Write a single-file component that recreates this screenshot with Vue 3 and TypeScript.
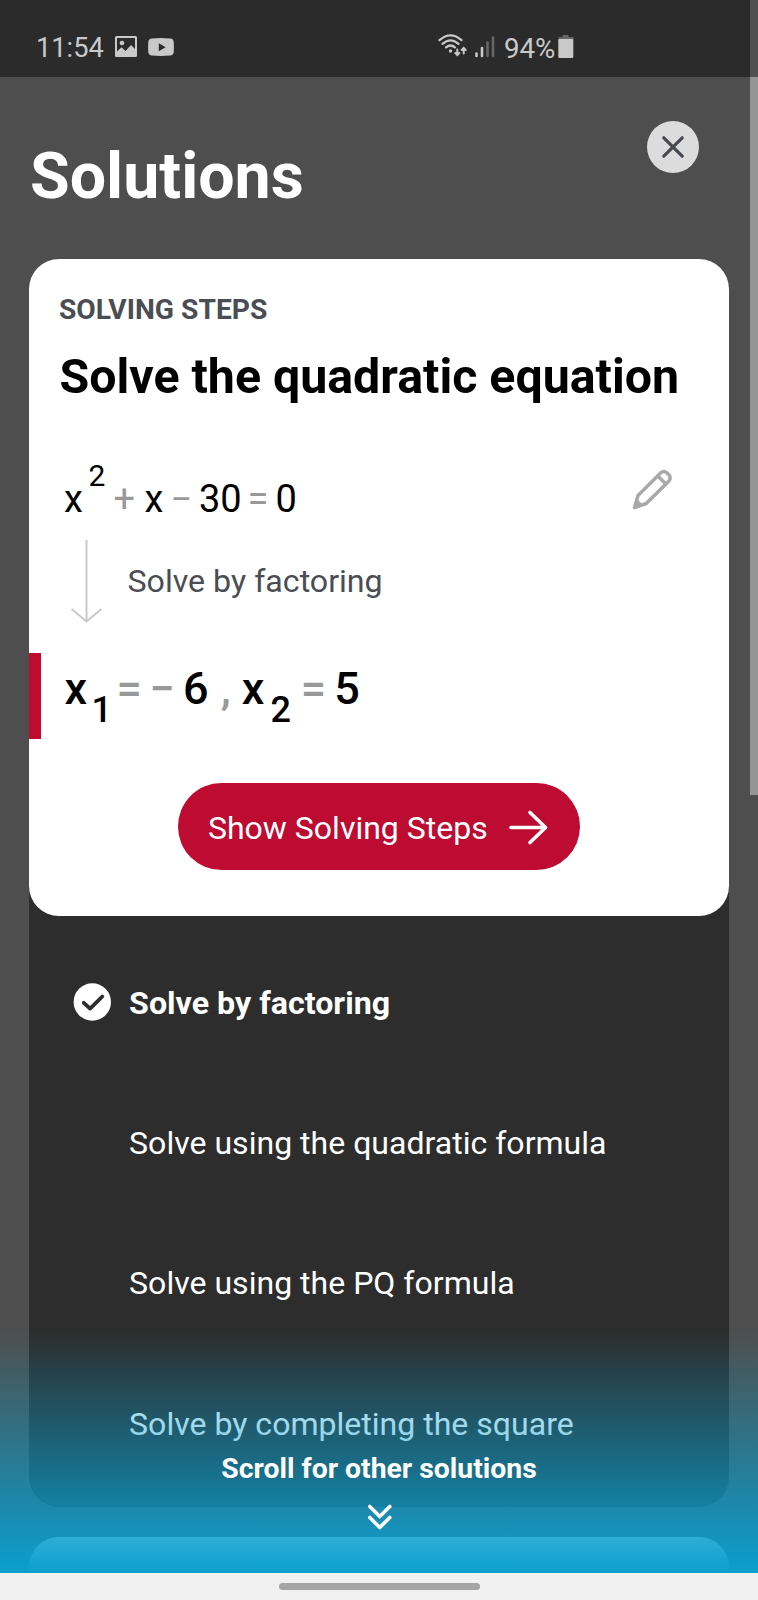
<script setup lang="ts">
import { ref } from 'vue'

interface Token {
  text: string
  kind: string
  slot: string
}

const equation: Token[] = [
  { text: 'x', kind: 'var', slot: 'e1' },
  { text: '2', kind: 'sup', slot: 'e2' },
  { text: '+', kind: 'op', slot: 'e3' },
  { text: 'x', kind: 'var', slot: 'e4' },
  { text: '−', kind: 'op', slot: 'e5' },
  { text: '30', kind: 'var', slot: 'e6' },
  { text: '=', kind: 'op', slot: 'e7' },
  { text: '0', kind: 'var', slot: 'e8' },
]

const result: Token[] = [
  { text: 'x', kind: 'var', slot: 'r1' },
  { text: '1', kind: 'sub', slot: 'r2' },
  { text: '=', kind: 'op', slot: 'r3' },
  { text: '−', kind: 'op', slot: 'r4' },
  { text: '6', kind: 'var', slot: 'r5' },
  { text: ',', kind: 'op', slot: 'r6' },
  { text: 'x', kind: 'var', slot: 'r7' },
  { text: '2', kind: 'sub', slot: 'r8' },
  { text: '=', kind: 'op', slot: 'r9' },
  { text: '5', kind: 'var', slot: 'r10' },
]

const methods = [
  'Solve by factoring',
  'Solve using the quadratic formula',
  'Solve using the PQ formula',
  'Solve by completing the square',
]
const selected = ref(0)
</script>

<template>
  <div class="screen">
    <div class="status">
      <span class="clock">11:54</span>
      <svg class="photo" width="22" height="21" viewBox="0 0 22 21">
        <path fill="#c9c9c9" fill-rule="evenodd" d="M1.500 0h19A1.500 1.500 0 0 1 22 1.500v18a1.500 1.500 0 0 1-1.500 1.500h-19A1.500 1.500 0 0 1 0 19.500v-18A1.500 1.500 0 0 1 1.500 0zM2 2v13.500l4.500-4.200 4 3.800 5.500-6 4 4V2zM7 4.700a2.300 2.300 0 1 1-.01 0z" />
      </svg>
      <svg class="tube" width="26" height="18" viewBox="0 0 26 18">
        <path fill="#c9c9c9" d="M4 .5Q13-.4 22 .5 25.500.8 25.700 4q.4 5 0 10-.2 3.200-3.700 3.500-9 .9-18 0Q.5 17.200.3 14q-.4-5 0-10Q.5.800 4 .5z" />
        <path fill="#2b2b2b" d="M10.800 5.200v8l6.800-4z" />
      </svg>
      <svg class="wifi" width="30" height="24" viewBox="0 0 30 24">
        <g fill="none" stroke="#c9c9c9" stroke-width="2.300" stroke-linecap="round">
          <path d="M1.500 6.200Q12.500-3.400 23.500 6.200M4.500 9.900Q12.500 2.800 20.500 9.900M8 13.300Q12.500 9.700 17 13.300" />
          <path d="M19.300 15.500v5M17.300 19l2 2 2-2M25.700 19.500v-5M23.700 16l2-2 2 2" stroke-width="2" />
        </g>
        <circle cx="12.500" cy="17" r="1.700" fill="#c9c9c9" />
      </svg>
      <svg class="signal" width="20" height="22" viewBox="0 0 20 22">
        <path d="M1.500 17.500v2.500M7 12v8" stroke="#c9c9c9" stroke-width="2.600" stroke-linecap="round" />
        <path d="M12.500 6.500v13.500M18 1.500v18.500" stroke="#666" stroke-width="2.600" stroke-linecap="round" />
      </svg>
      <span class="percent">94%</span>
      <svg class="battery" width="16" height="24" viewBox="0 0 16 24">
        <path fill="#666" d="M4.500 0h6v2H15.500V5H.5V2H4.500z" />
        <rect x=".3" y="4" width="15" height="19" rx="1.200" fill="#c9c9c9" />
      </svg>
    </div>

    <header class="header">
      <h1>Solutions</h1>
      <button class="close" aria-label="Close">
        <svg width="24" height="24" viewBox="0 0 24 24">
          <path d="M2.800 2.800l18.400 18.400M21.200 2.800L2.800 21.200" stroke="#464a50" stroke-width="3.200" stroke-linecap="round" />
        </svg>
      </button>
    </header>

    <main class="panel">
      <section class="card">
        <div class="eyebrow">SOLVING STEPS</div>
        <h2>Solve the quadratic equation</h2>
        <div class="problem">
          <div class="math">
            <span v-for="t in equation" :key="t.slot" :class="['tok', t.kind, t.slot]">{{ t.text }}</span>
          </div>
          <svg class="pencil" width="42" height="42" viewBox="0 0 42 42" fill="none" stroke="#a9a9a9" stroke-width="3.500" stroke-linejoin="round" stroke-linecap="round">
            <path d="M3.500 38.500L7 26.500 29.800 3.700a4.500 4.500 0 0 1 6 0l2.200 2.200a4.500 4.500 0 0 1 0 6L15.200 34.500zM26.800 7l8 8" />
            <path d="M3.500 38.500l2.200-7.500 5 5z" fill="#a9a9a9" stroke-width="2" />
          </svg>
        </div>
        <div class="step">
          <svg width="32" height="83" viewBox="0 0 32 83" fill="none" stroke="#c9c9c9" stroke-width="2">
            <path d="M16.500 0v81M1.500 69l15 12.500L31.500 69" />
          </svg>
          <span>Solve by factoring</span>
        </div>
        <div class="result">
          <span v-for="t in result" :key="t.slot" :class="['tok', t.kind, t.slot]">{{ t.text }}</span>
        </div>
        <button class="cta">
          <span>Show Solving Steps</span>
          <svg width="40" height="36" viewBox="0 0 40 36" fill="none" stroke="#fff" stroke-width="3.600" stroke-linecap="round" stroke-linejoin="round">
            <path d="M3 18.500H37.500M22 3.500l15.500 15L22 33.500" />
          </svg>
        </button>
      </section>

      <ul class="methods">
        <li v-for="(name, i) in methods" :key="name" :class="{ active: i === selected }" @click="selected = i">
          <span class="mark">
            <svg v-if="i === selected" width="38" height="38" viewBox="0 0 38 38">
              <circle cx="19.300" cy="19" r="18.700" fill="#fff" />
              <path d="M10.800 19.800l6.300 5.800L29.300 13.500" fill="none" stroke="#2d2d2d" stroke-width="3.800" stroke-linecap="round" stroke-linejoin="round" />
            </svg>
          </span>
          <span>{{ name }}</span>
        </li>
      </ul>
    </main>

    <div class="next-card"></div>

    <div class="scroll-hint">
      <span>Scroll for other solutions</span>
      <svg width="24" height="26" viewBox="0 0 24 26" fill="none" stroke="#fff" stroke-width="3.600" stroke-linecap="round" stroke-linejoin="round">
        <path d="M2.800 2.500l10 10 10-10M2.800 13.500l10 10 10-10" />
      </svg>
    </div>
    <div class="scrollbar"></div>
    <nav class="navbar"><span></span></nav>
  </div>
</template>

<style>
body {
  margin: 0;
}
</style>

<style scoped>
.screen {
  position: relative;
  width: 758px;
  height: 1600px;
  overflow: hidden;
  background: #4e4e4e;
  font-family: Roboto, 'Liberation Sans', sans-serif;
  color: #fff;
}
h1, h2, ul {
  margin: 0;
  padding: 0;
}
button {
  border: 0;
  padding: 0;
  font: inherit;
}
svg {
  display: block;
  flex: none;
  overflow: visible;
}
.status {
  display: flex;
  align-items: flex-start;
  box-sizing: border-box;
  height: 77px;
  padding: 36px 0 0 36px;
  background: #2b2b2b;
  color: #c9c9c9;
  font-size: 27.200px;
  line-height: 25px;
}
.clock { width: 79px; }
.photo { margin-right: 11px; }
.tube { margin: 2px 264px 0 0; }
.wifi { margin: -2px 7px 0 0; }
.signal { margin-right: 9px; }
.percent { width: 54px; font-size: 27.700px; line-height: 25px; }
.battery { margin-top: -1px; }
.header {
  display: flex;
  justify-content: space-between;
  box-sizing: border-box;
  height: 182px;
  padding: 44.300px 59px 0 30px;
}
h1 {
  margin-top: 18px;
  font-size: 64.500px;
  line-height: 75px;
  font-weight: 700;
}
.close {
  display: flex;
  align-items: center;
  justify-content: center;
  width: 52px;
  height: 52px;
  border-radius: 50%;
  background: #dcdcdc;
}
.panel {
  width: 699.400px;
  height: 1248px;
  margin-left: 29.400px;
  border-radius: 30px;
  background: #2d2d2d;
}
.card {
  box-sizing: border-box;
  height: 657px;
  padding-top: 35px;
  border-radius: 30px;
  background: #fff;
  color: #000;
}
.eyebrow {
  padding-left: 29.600px;
  font-size: 28.200px;
  line-height: 32px;
  font-weight: 700;
  color: #4a4d54;
}
h2 {
  margin-top: 22.500px;
  padding-left: 30.100px;
  font-size: 48.300px;
  line-height: 56px;
  font-weight: 700;
  white-space: nowrap;
}
.problem {
  display: flex;
  justify-content: space-between;
  margin-top: 64px;
  height: 71.5px;
  padding: 0 56px 0 34.600px;
}
.math, .result {
  display: flex;
  align-items: baseline;
}
.math {
  height: 60px;
  font-size: 38px;
  line-height: 60px;
}
.tok { flex: none; white-space: nowrap; }
.op { color: #999; }
.sup { font-size: 30px; transform: translateY(-26px); }
.sub { font-size: 36px; transform: translateY(18px); }
.e1 { width: 24.500px; }
.e2 { width: 25px; }
.e3 { width: 31px; }
.e4 { width: 26px; }
.e5 { width: 28.500px; }
.e6 { width: 48.500px; }
.e7 { width: 28px; }
.step {
  display: flex;
  align-items: center;
  height: 83px;
  padding-left: 40.600px;
  color: #4a4d54;
  font-size: 32.150px;
}
.step span { margin: 0 0 2px 25.500px; }
.result {
  box-sizing: border-box;
  height: 86px;
  margin-top: 30px;
  padding-left: 23px;
  border-left: 12px solid #bd0b31;
  font-size: 45px;
  line-height: 72px;
  font-weight: 500;
}
.r1 { width: 27px; }
.r2 { width: 25px; }
.r3 { width: 33px; }
.r4 { width: 33.500px; }
.r5 { width: 37.800px; }
.r6 { width: 21px; }
.r7 { width: 28.800px; }
.r8 { width: 30.300px; }
.r9 { width: 33.500px; }
.cta {
  display: flex;
  align-items: center;
  box-sizing: border-box;
  width: 402px;
  height: 87px;
  margin: 44px 0 0 148.600px;
  padding-left: 30px;
  border-radius: 44px;
  background: #bd0b31;
  color: #fff;
  font-size: 32px;
}
.cta span { width: 300px; padding-top: 2px; text-align: left; }
.methods {
  list-style: none;
  padding-top: 17px;
}
.methods li {
  display: flex;
  align-items: center;
  height: 140.200px;
  padding-left: 43.700px;
  font-size: 32.050px;
}
.methods .active { font-weight: 700; font-size: 32.200px; }
.mark { width: 38px; height: 38px; margin: 0 18px 2.500px 0; }
.next-card {
  height: 36px;
  margin: 30px 29.200px 0 29.400px;
  border-radius: 30px 30px 0 0;
  background: #fff;
}
.scroll-hint {
  position: absolute;
  left: 0;
  right: 0;
  top: 1330px;
  height: 243px;
  box-sizing: border-box;
  padding-top: 122px;
  display: flex;
  flex-direction: column;
  align-items: center;
  gap: 18px;
  background: linear-gradient(rgba(10, 159, 207, 0), #0a9fcf);
  font-size: 28.350px;
  line-height: 34px;
  font-weight: 700;
}
.scrollbar {
  position: absolute;
  top: 0;
  right: 0;
  width: 8px;
  height: 795px;
  background: linear-gradient(#505050 77px, #959595 77px);
}
.navbar {
  position: absolute;
  left: 0;
  right: 0;
  bottom: 0;
  height: 27px;
  background: #f1f1f1;
}
.navbar span {
  display: block;
  width: 201px;
  height: 7px;
  margin: 10px 0 0 278.500px;
  border-radius: 4px;
  background: #a5a5a5;
}
</style>
